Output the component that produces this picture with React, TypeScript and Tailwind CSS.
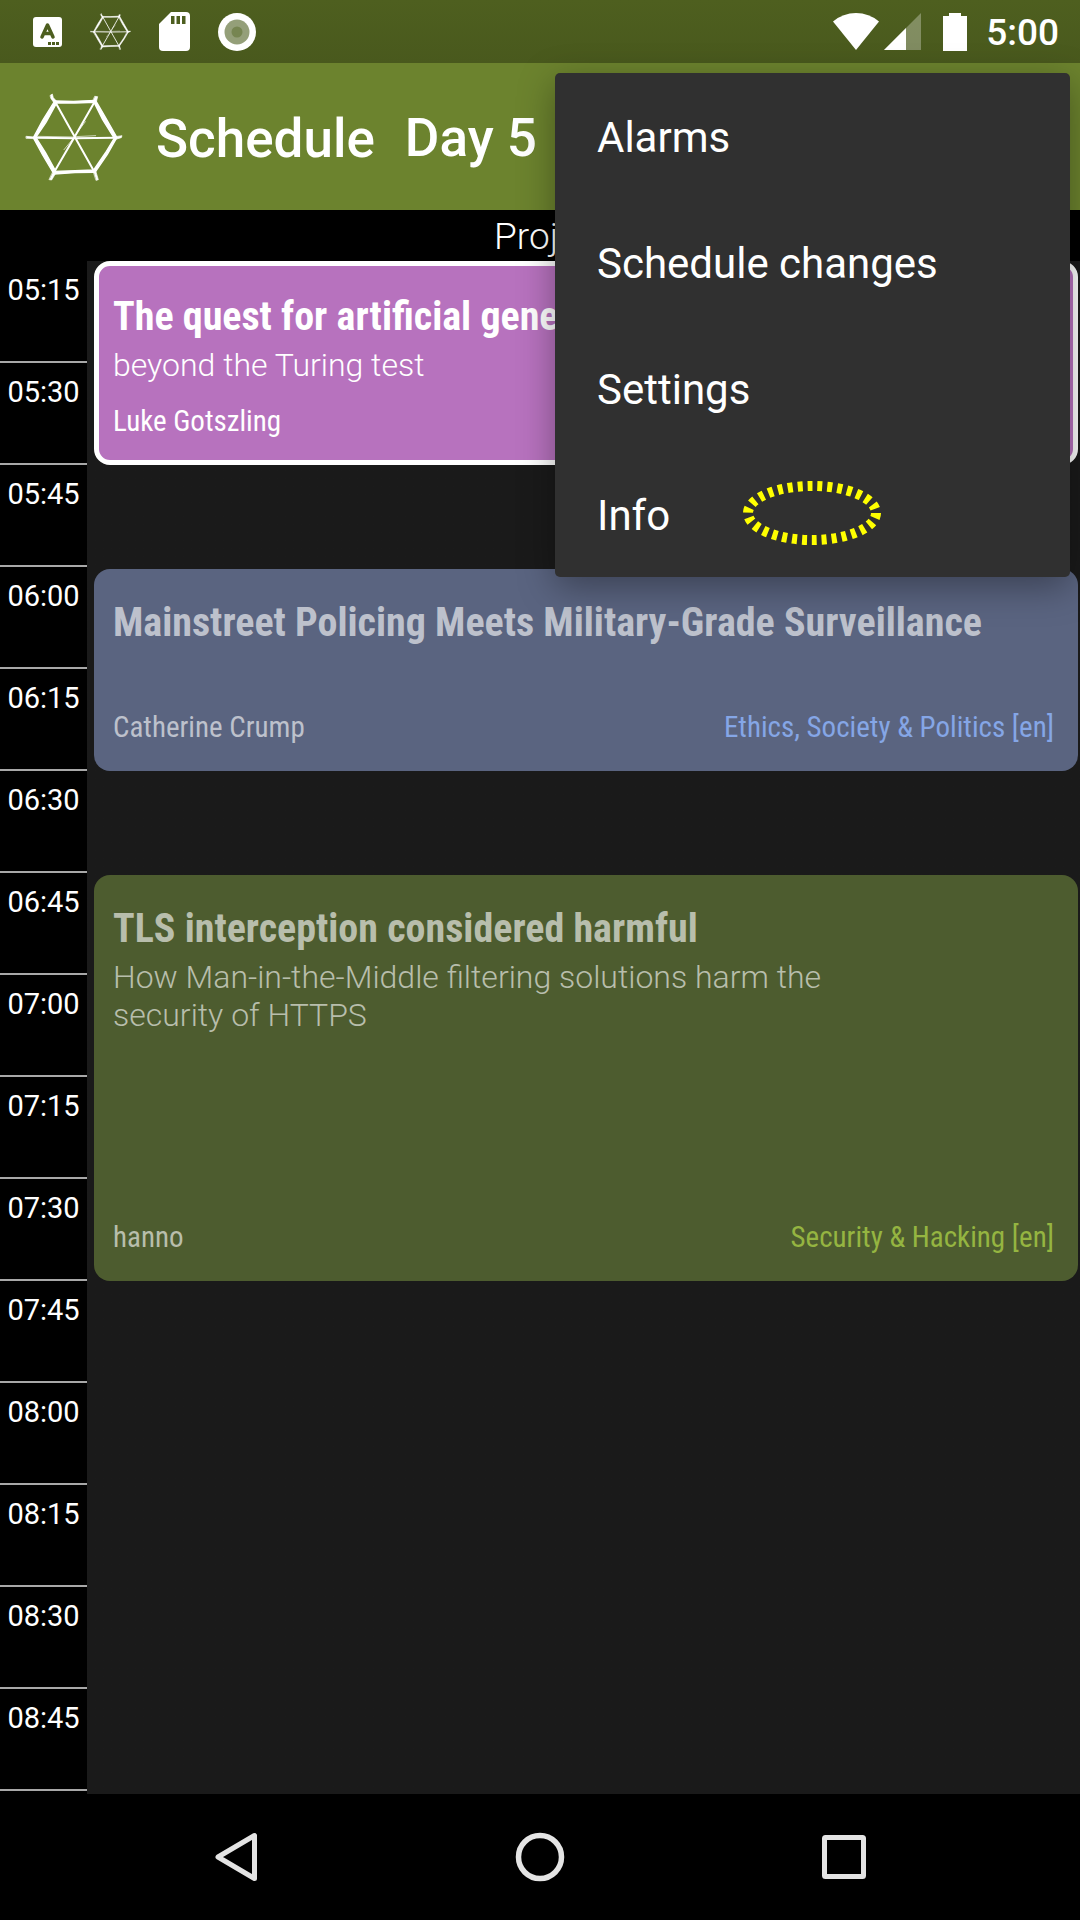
import React from "react";

const times = [
  "05:15", "05:30", "05:45", "06:00", "06:15", "06:30", "06:45", "07:00",
  "07:15", "07:30", "07:45", "08:00", "08:15", "08:30", "08:45",
];

const menuItems = ["Alarms", "Schedule changes", "Settings", "Info"];

function WebLogo({ className }: { className: string }) {
  return (
    <svg viewBox="75 36 294 264" className={className} fill="#fff" stroke="#fff" strokeLinecap="round" aria-hidden="true">
      <path
        fill="none"
        strokeWidth="6"
        d="M167 65 224 167 283 272M284 62 224 167 163 272M104 170 224 172 347 170"
      />
      <path fill="none" strokeWidth="2" d="M224 167 287 164M224 168 112 166M228 160 256 122M220 172 192 206M238 140 248 130" />
      <path
        strokeWidth="4"
        strokeLinejoin="round"
        d="M165 60 220 61 286 58 284 64 225 66 167 66ZM281 62 288 60 318 112 350 168 343 172 308 116ZM343 171 350 171 322 220 285 274 279 270 316 216ZM162 271 225 269 282 267 283 274 225 275 162 279ZM101 172 108 170 136 214 167 270 160 276 128 222ZM101 168 128 118 163 62 170 66 138 124 108 168Z"
      />
      <path
        strokeWidth="2"
        strokeLinejoin="round"
        d="M151 43 157 39 160 50 170 61 163 67 153 53ZM285 46 293 47 290 59 284 66 279 60ZM345 167 366 164 364 170 347 175ZM280 270 287 269 295 296 289 298ZM159 273 167 277 155 297 148 296ZM79 166 104 168 106 173 79 172Z"
      />
    </svg>
  );
}

function StatusBar() {
  return (
    <div className="flex h-[63px] items-center justify-between bg-linear-to-b from-[#4e5f1f] to-[#49591d] pr-[21px] pl-8">
      <div className="flex items-center gap-7">
        <svg viewBox="0 0 30 32" className="h-8 w-[30px]" aria-hidden="true">
          <rect x="1" y="1" width="29" height="30" rx="3" fill="#fff" />
          <path d="M10 21 15.500 9 21 21M12 17.500H19" fill="none" stroke="#4d5e1f" strokeWidth="3.500" strokeLinecap="round" strokeLinejoin="round" />
          <path d="M16 26h3v3h-3zM20 26h3v3h-3zM24 26h3v3h-3z" fill="#4d5e1f" />
        </svg>
        <WebLogo className="h-[37px] w-[41px]" />
        <svg viewBox="0 0 31 39" className="h-[39px] w-[31px]" aria-hidden="true">
          <path d="M12 0H27Q31 0 31 4V35Q31 39 27 39H4Q0 39 0 35V12Z" fill="#fff" />
          <path d="M12 4h3.500v8H12zM17.500 4H21v8h-3.500zM23 4h3.500v8H23z" fill="#4d5e1f" />
        </svg>
        <svg viewBox="0 0 38 38" className="h-[38px] w-[38px]" aria-hidden="true">
          <circle cx="19" cy="19" r="19" fill="#fff" />
          <circle cx="19" cy="19" r="12.500" fill="#949f79" />
          <circle cx="19" cy="19" r="5.500" fill="#768551" />
        </svg>
      </div>
      <div className="flex items-center">
        <svg viewBox="0 0 46 37" className="h-[37px] w-[46px]" aria-hidden="true">
          <path d="M23 37 0 8.500Q10 0 23 0T46 8.500Z" fill="#fff" />
        </svg>
        <svg viewBox="0 0 37 37" className="ml-[5px] h-[37px] w-[37px]" aria-hidden="true">
          <path d="M0 37 37 0V37Z" fill="#fff" fillOpacity="0.3" />
          <path d="M0 37 22 15V37Z" fill="#fff" />
        </svg>
        <svg viewBox="0 0 24 38" className="ml-[22px] h-[38px] w-6" aria-hidden="true">
          <path d="M6 0H18V3H24V38H0V3H6Z" fill="#fff" />
        </svg>
        <span className="ml-[19px] pt-[2px] text-[37px] leading-[43px] font-medium">5:00</span>
      </div>
    </div>
  );
}

type EventProps = {
  title: string;
  subtitle?: string;
  speaker: string;
  track?: string;
  className: string;
  trackClass?: string;
};

function EventCard({ title, subtitle, speaker, track, className, trackClass }: EventProps) {
  return (
    <article className={`col-start-2 mr-[2px] ml-[7px] flex flex-col rounded-2xl ${className}`}>
      <h2 className="overflow-hidden font-['Roboto_Condensed'] text-[40px] leading-[52px] font-bold whitespace-nowrap">{title}</h2>
      {subtitle && <p className="mt-[3px] w-[760px] max-w-full text-[32px] leading-[38px] font-light">{subtitle}</p>}
      <div className="mt-auto flex justify-between font-['Roboto_Condensed'] text-[29px] leading-[34px]">
        <span>{speaker}</span>
        {track && <span className={trackClass}>{track}</span>}
      </div>
    </article>
  );
}

function OverflowMenu() {
  return (
    <div
      role="menu"
      className="absolute top-[73px] right-[10px] flex w-[515px] flex-col rounded-[5px] bg-[#303030] shadow-[0_10px_36px_rgba(0,0,0,0.35)]"
    >
      {menuItems.map((item) => (
        <button key={item} role="menuitem" type="button" className="flex h-[126px] items-center pt-1 pl-[42px] text-left text-[42px] leading-[50px]">
          {item}
        </button>
      ))}
      <svg viewBox="0 0 140 66" className="pointer-events-none absolute right-[188px] bottom-[31px] h-[66px] w-[140px]" aria-hidden="true">
        <ellipse cx="70" cy="33" rx="64" ry="27" fill="none" stroke="#ff0" strokeWidth="10" strokeDasharray="5 4.930" />
      </svg>
    </div>
  );
}

export default function App() {
  return (
    <div className="relative flex min-h-screen flex-col bg-black font-['Roboto',sans-serif] text-white">
      <StatusBar />
      <header className="flex h-[147px] items-center bg-[#6c832e] pl-[25px]">
        <WebLogo className="h-[88px] w-[98px]" />
        <h1 className="ml-[33px] pt-1.5 text-[53px] leading-[61px] font-medium">Schedule</h1>
        <span className="ml-[30px] pt-1 text-[53px] leading-[61px] font-medium">Day 5</span>
      </header>
      <div className="flex h-[51px] items-center pt-[2px] pl-[494px] text-[37px] leading-[43px] font-light">Proj</div>
      <main className="grid grow auto-rows-[102px] grid-cols-[87px_1fr] bg-linear-to-r from-black from-[87px] to-[#1a1a1a] to-[87px]">
        {times.map((time) => (
          <time key={time} className="col-start-1 border-b-2 border-[#a8a8a8] pt-3 text-center text-[29px] leading-[34px]">
            {time}
          </time>
        ))}
        <EventCard
          title="The quest for artificial general intelligence"
          subtitle="beyond the Turing test"
          speaker="Luke Gotszling"
          className="row-span-2 row-start-1 border-[5px] border-white bg-[#b772be] px-[14px] pt-[25px] pb-[22px]"
        />
        <EventCard
          title="Mainstreet Policing Meets Military-Grade Surveillance"
          speaker="Catherine Crump"
          track="Ethics, Society & Politics [en]"
          trackClass="text-[#85a6e6]"
          className="row-span-2 row-start-4 mt-[2px] bg-[#5a6480] pt-7 pr-6 pb-[27px] pl-[19px] text-[#bdc1cc]"
        />
        <EventCard
          title="TLS interception considered harmful"
          subtitle="How Man-in-the-Middle filtering solutions harm the security of HTTPS"
          speaker="hanno"
          track="Security & Hacking [en]"
          trackClass="text-[#95b541]"
          className="row-span-4 row-start-7 mt-[2px] bg-[#4d5c2f] pt-7 pr-6 pb-[27px] pl-[19px] text-[#b8beac]"
        />
      </main>
      <nav className="flex h-[126px] items-center justify-center gap-[254px]">
        <button type="button" aria-label="Back">
          <svg viewBox="0 0 50 50" className="h-[50px] w-[50px]" aria-hidden="true">
            <path d="M43.500 3.500V46.500L7 25Z" fill="none" stroke="#e4e4e4" strokeWidth="5" strokeLinejoin="round" />
          </svg>
        </button>
        <button type="button" aria-label="Home">
          <svg viewBox="0 0 50 50" className="h-[50px] w-[50px]" aria-hidden="true">
            <circle cx="25" cy="25" r="21.500" fill="none" stroke="#e4e4e4" strokeWidth="5.500" />
          </svg>
        </button>
        <button type="button" aria-label="Recent apps">
          <svg viewBox="0 0 50 50" className="h-[50px] w-[50px]" aria-hidden="true">
            <rect x="5.500" y="5.500" width="39" height="39" rx="1" fill="none" stroke="#e4e4e4" strokeWidth="5" />
          </svg>
        </button>
      </nav>
      <OverflowMenu />
    </div>
  );
}
